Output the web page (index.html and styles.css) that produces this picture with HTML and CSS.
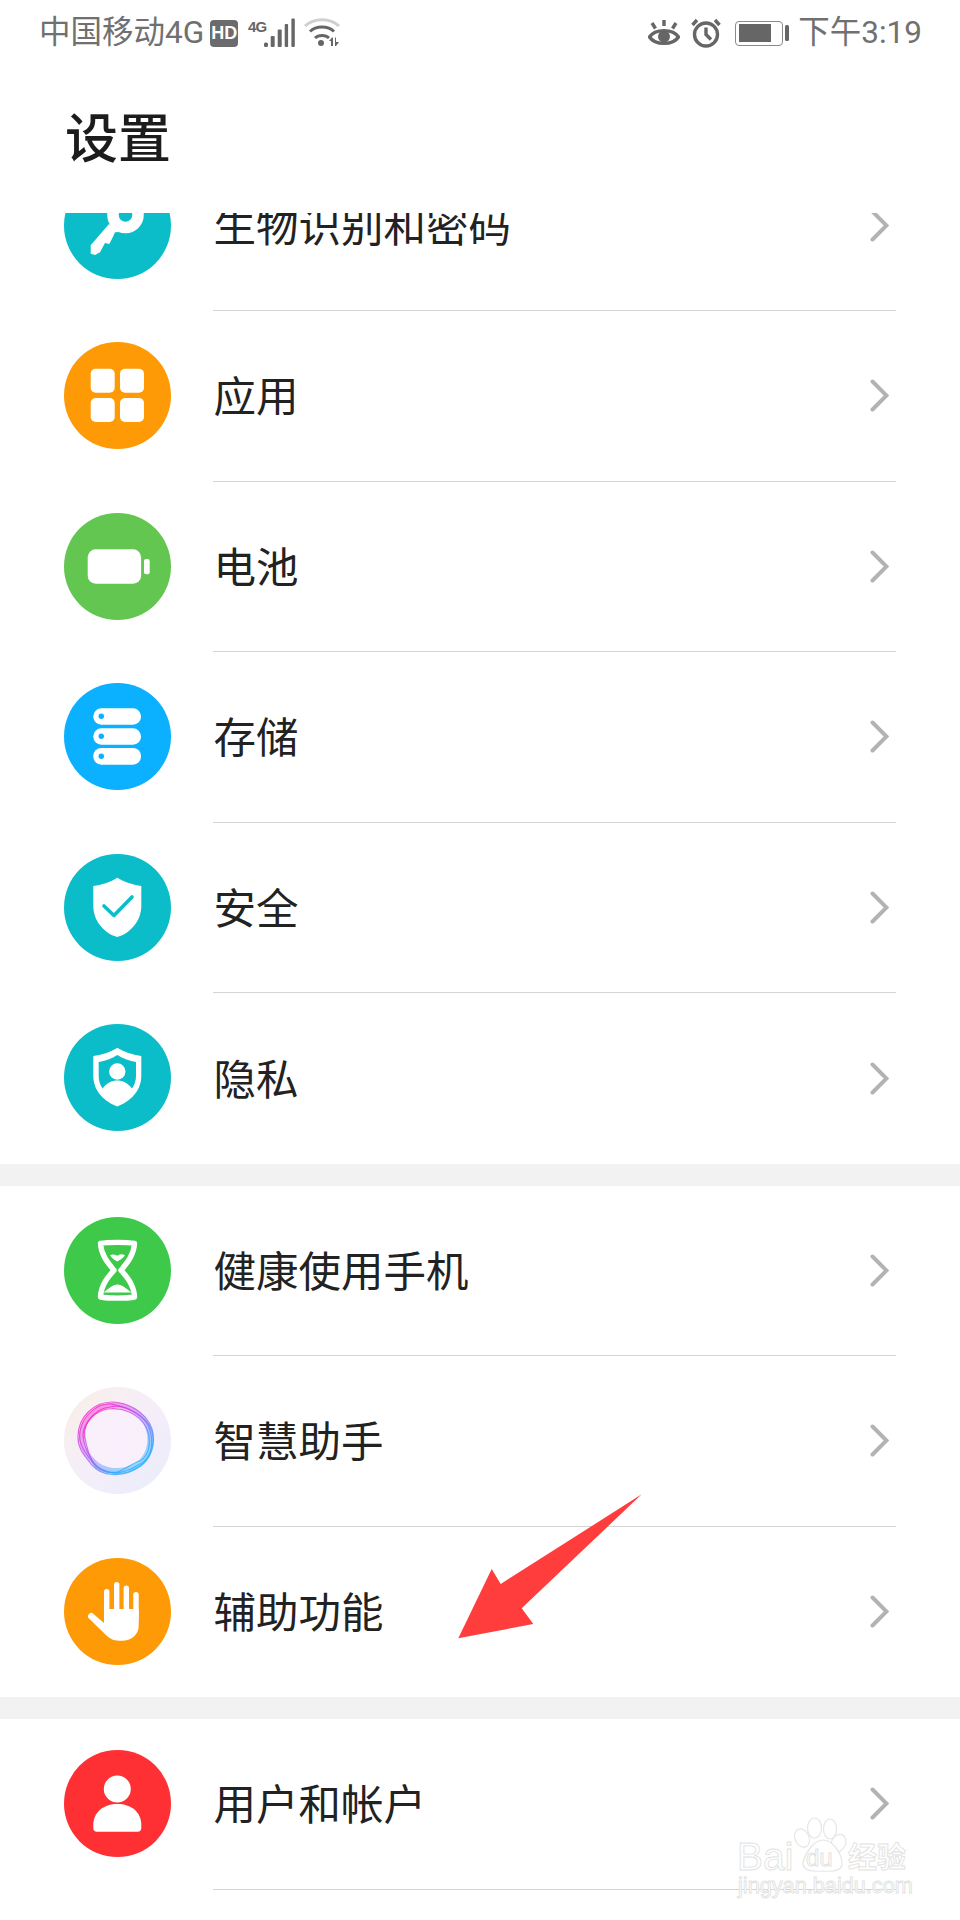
FILE: index.html
```html
<!DOCTYPE html>
<html lang="zh-CN">
<head>
<meta charset="utf-8">
<title>设置</title>
<link rel="stylesheet" href="styles.css">
</head>
<body>
<div class="page">
  <header class="status">
    <div class="status-left">
      <span class="carrier">中国移动4G</span>
      <span class="hd">HD</span>
      <svg class="signal" width="47" height="30" viewBox="0 0 47 30">
        <text class="net" x="0" y="14">4G</text>
        <rect x="16" y="24.5" width="4" height="4.5" rx="1.5"/>
        <rect x="22.7" y="18" width="4" height="11" rx="1"/>
        <rect x="29.7" y="11.5" width="4" height="17.5" rx="1"/>
        <rect x="36.7" y="6" width="3.4" height="23" rx="1"/>
        <rect x="43.4" y="0.5" width="3.4" height="28.5" rx="1"/>
      </svg>
      <svg class="wifi" width="36" height="30" viewBox="0 0 36 30">
        <path class="wifi-off" d="M1 8 C10 -0.5 26 -0.5 35 8"/>
        <path class="wifi-on" d="M6 13.5 C12 7.5 24 7.5 30 13.5"/>
        <path class="wifi-on" d="M11 20 C14.5 16.5 21.5 16.5 25 20"/>
        <circle class="wifi-dot" cx="17" cy="25" r="3"/>
        <path class="wifi-dot" d="M27 28 V23 H25 L28 19.5 L29 19.5 V28Z M31 19.5 H32 V24 H35 L32 28 H31Z"/>
      </svg>
    </div>
    <div class="status-right">
      <svg class="eye" width="32" height="28" viewBox="0 0 32 28">
        <path class="glyph-line" d="M1.5 18 C7 9.5 25 9.5 30.5 18 C25 26.5 7 26.5 1.5 18Z"/>
        <circle class="glyph-fill" cx="16" cy="17.5" r="6"/>
        <path class="glyph-line" d="M16 1 V7 M4 4 L7.5 9.5 M28 4 L24.5 9.5"/>
      </svg>
      <svg class="alarm" width="30" height="30" viewBox="0 0 30 30">
        <circle class="glyph-line" cx="15" cy="16.5" r="11.5"/>
        <path class="glyph-line" d="M15 9.5 V16.5 L20 21.5 M1.5 7 L6 2 M28.5 7 L24 2"/>
      </svg>
      <div class="battery">
        <div class="battery-body"><div class="battery-level"></div></div>
        <div class="battery-nub"></div>
      </div>
      <span class="time">下午3:19</span>
    </div>
  </header>

  <h1 class="title">设置</h1>

  <main class="list">
    <div class="scroll">
      <section class="section">
        <div class="row">
          <div class="icon teal"><svg viewBox="0 0 106.6 106.6">
            <circle cx="61.5" cy="43" r="12.5" fill="none" stroke="#fff" stroke-width="11.5"/>
            <path fill="#fff" d="M45 52 L26.7 73.3 V81.7 L31 83 L36 80.3 L41 71 L45.3 72 L49 64.7 L51 60.3 L56 60 Z"/>
          </svg></div>
          <div class="row-body"><span class="label">生物识别和密码</span><svg class="chev" viewBox="0 0 19 33"><path d="M2.5 2.5 L16.5 16.5 L2.5 30.5"/></svg></div>
        </div>
        <div class="row">
          <div class="icon orange"><svg viewBox="0 0 106.6 106.6" fill="#fff">
            <rect x="26.7" y="26.7" width="24" height="24" rx="5"/>
            <rect x="56" y="26.7" width="24" height="24" rx="5"/>
            <rect x="26.7" y="56" width="24" height="24" rx="5"/>
            <rect x="56" y="56" width="24" height="24" rx="5"/>
          </svg></div>
          <div class="row-body"><span class="label">应用</span><svg class="chev" viewBox="0 0 19 33"><path d="M2.5 2.5 L16.5 16.5 L2.5 30.5"/></svg></div>
        </div>
        <div class="row">
          <div class="icon green"><svg viewBox="0 0 106.6 106.6" fill="#fff">
            <rect x="23.7" y="36.3" width="53.4" height="34.4" rx="8"/>
            <rect x="80" y="46" width="5.7" height="15.3" rx="2"/>
          </svg></div>
          <div class="row-body"><span class="label">电池</span><svg class="chev" viewBox="0 0 19 33"><path d="M2.5 2.5 L16.5 16.5 L2.5 30.5"/></svg></div>
        </div>
        <div class="row">
          <div class="icon blue"><svg viewBox="0 0 106.6 106.6">
            <g fill="#fff">
              <rect x="29.3" y="25.3" width="47.7" height="16.4" rx="8"/>
              <rect x="29.3" y="45.3" width="47.7" height="16.4" rx="8"/>
              <rect x="29.3" y="65" width="47.7" height="16.7" rx="8"/>
            </g>
            <g fill="#0bb0ff">
              <circle cx="37.3" cy="33.3" r="2.7"/>
              <circle cx="37.3" cy="53.3" r="2.7"/>
              <circle cx="37.3" cy="73.3" r="2.7"/>
            </g>
          </svg></div>
          <div class="row-body"><span class="label">存储</span><svg class="chev" viewBox="0 0 19 33"><path d="M2.5 2.5 L16.5 16.5 L2.5 30.5"/></svg></div>
        </div>
        <div class="row">
          <div class="icon teal"><svg viewBox="0 0 106.6 106.6">
            <path fill="#fff" d="M53.3 23.7 C60 28 70 31 77.3 32 V52 C77.3 68 65 80 53.3 83 C41.6 80 29.3 68 29.3 52 V32 C37 31 47 28 53.3 23.7Z"/>
            <path fill="none" stroke="#0bbdc9" stroke-width="3.6" stroke-linecap="round" stroke-linejoin="round" d="M40 52 L50 61.5 L68 43"/>
          </svg></div>
          <div class="row-body"><span class="label">安全</span><svg class="chev" viewBox="0 0 19 33"><path d="M2.5 2.5 L16.5 16.5 L2.5 30.5"/></svg></div>
        </div>
        <div class="row">
          <div class="icon teal"><svg viewBox="0 0 106.6 106.6">
            <path fill="#fff" d="M53.3 23.7 C60 28 70 31 77.3 32 V52 C77.3 68 65 78 53.3 82.5 C41.6 78 29.3 68 29.3 52 V32 C37 31 47 28 53.3 23.7Z"/>
            <path fill="#0bbdc9" d="M53.3 31 C59 34.5 66 37 72 38 V52 C72 57 70.5 61 68 64.5 C64 59 58.5 56.5 53.3 56.5 C48 56.5 42.5 59 38.7 64.5 C36 61 34.7 57 34.7 52 V38 C41 37 48 34.5 53.3 31Z"/>
            <circle fill="#fff" cx="53.3" cy="47.5" r="8.2"/>
          </svg></div>
          <div class="row-body last"><span class="label">隐私</span><svg class="chev" viewBox="0 0 19 33"><path d="M2.5 2.5 L16.5 16.5 L2.5 30.5"/></svg></div>
        </div>
      </section>

      <section class="section">
        <div class="row">
          <div class="icon lime"><svg viewBox="0 0 106.6 106.6">
            <path fill="none" stroke="#fff" stroke-width="5.4" stroke-linejoin="round" d="M36.5 26.5 C44 25 63 25 70.5 26.5 C70 38 63 46 57 53.3 C63 60 70 68 70.5 80 C63 81.5 44 81.5 36.5 80 C37 68 44 60 50 53.3 C44 46 37 38 36.5 26.5Z"/>
            <path fill="#fff" d="M46 38.5 C50 36 52 39 54 38.5 C56 37 59 37 61 38.5 C59 41 56 43 53.3 44.5 C50.5 43 48 41 46 38.5Z M39.5 75.5 C44 72 49 67.5 53.3 67.5 C58 67.5 63 72 67.5 75.5Z"/>
          </svg></div>
          <div class="row-body"><span class="label">健康使用手机</span><svg class="chev" viewBox="0 0 19 33"><path d="M2.5 2.5 L16.5 16.5 L2.5 30.5"/></svg></div>
        </div>
        <div class="row">
          <div class="icon assistant"><svg viewBox="0 0 106.6 106.6">
            <defs>
              <linearGradient id="ringGrad" x1="0.15" y1="0.05" x2="0.85" y2="0.9">
                <stop offset="0" stop-color="#ff22cc"/>
                <stop offset="0.45" stop-color="#b45cf2"/>
                <stop offset="0.85" stop-color="#33a6ff"/>
                <stop offset="1" stop-color="#2db4ff"/>
              </linearGradient>
            </defs>
            <g fill="none" stroke="url(#ringGrad)">
              <path class="ring-band" stroke-width="5" d="M17.5 50 C17.5 33 32 19 50 18 C64 18 81 27 85 44 C88 57 84 72 71 79 C58 86 39 85 30 75 C23 68 17.5 62 17.5 50Z"/>
              <path class="ring-line" d="M14 50 C14 30 30 15 48 15 C62 15 82 24 88 42 C92 56 88 74 72 82 C58 90 38 90 28 78 C20 68 14 62 14 50Z"/>
              <path class="ring-line" d="M16 44 C19 28 35 13 52 18 C68 22 88 32 89 50 C90 66 80 80 64 85 C50 89 34 84 26 72 C20 64 14 56 16 44Z"/>
              <path class="ring-line" d="M22 56 C16 38 30 22 46 20 C60 16 78 28 84 38 C90 52 90 72 74 78 C62 86 44 90 32 80 C26 74 24 64 22 56Z"/>
              <path class="ring-line" d="M19 48 C20 34 32 24 44 22 C58 20 74 26 82 40 C88 52 86 68 76 74 C66 76 56 90 42 84 C30 82 20 62 19 48Z"/>
            </g>
          </svg></div>
          <div class="row-body"><span class="label">智慧助手</span><svg class="chev" viewBox="0 0 19 33"><path d="M2.5 2.5 L16.5 16.5 L2.5 30.5"/></svg></div>
        </div>
        <div class="row">
          <div class="icon orange"><svg viewBox="0 0 106.6 106.6" fill="#fff">
            <rect x="40" y="31" width="5.4" height="30" rx="2.7"/>
            <rect x="50" y="24" width="5.4" height="30" rx="2.7"/>
            <rect x="59.6" y="27.5" width="5.4" height="30" rx="2.7"/>
            <rect x="69.3" y="34" width="5.4" height="30" rx="2.7"/>
            <path d="M40 51 H74.7 V68 C74.7 77 67 82.7 58 82.7 H55 C49 82.7 45 80 41 76 L25 60.5 A3 3 0 0 1 29.5 56 L40 65Z"/>
          </svg></div>
          <div class="row-body last"><span class="label">辅助功能</span><svg class="chev" viewBox="0 0 19 33"><path d="M2.5 2.5 L16.5 16.5 L2.5 30.5"/></svg></div>
        </div>
      </section>

      <section class="section">
        <div class="row">
          <div class="icon red"><svg viewBox="0 0 106.6 106.6" fill="#fff">
            <circle cx="53.3" cy="39" r="13.5"/>
            <path d="M29.3 75 C29.3 62 40 54 53.3 54 C67 54 77.3 62 77.3 75 V78 A3.7 3.7 0 0 1 73.6 81.7 H33 A3.7 3.7 0 0 1 29.3 78Z"/>
          </svg></div>
          <div class="row-body"><span class="label">用户和帐户</span><svg class="chev" viewBox="0 0 19 33"><path d="M2.5 2.5 L16.5 16.5 L2.5 30.5"/></svg></div>
        </div>
      </section>
    </div>
  </main>

  <svg class="arrow" width="200" height="155" viewBox="450 1490 200 155">
    <polygon points="641.7,1494.3 521.7,1608.3 533.3,1624 458.3,1638.3 491.7,1569 500.7,1584"/>
  </svg>

  <svg class="watermark" width="190" height="100" viewBox="730 1810 190 100">
    <g class="wm-shape">
      <ellipse cx="802" cy="1838" rx="7" ry="9.5" transform="rotate(-25 802 1838)"/>
      <ellipse cx="814.5" cy="1828" rx="7" ry="10"/>
      <ellipse cx="830" cy="1829" rx="6.5" ry="10"/>
      <ellipse cx="838.5" cy="1843" rx="7" ry="9" transform="rotate(25 838.5 1843)"/>
      <path d="M803 1862 C806 1852 814 1840 823 1840 C832 1840 841 1852 842 1862 C843 1870 836 1872 823 1871 C810 1872 802 1870 803 1862Z"/>
    </g>
    <text class="wm-big" x="737" y="1870">Bai</text>
    <text class="wm-du" x="806" y="1866">du</text>
    <text class="wm-cjk" x="848" y="1868">经验</text>
    <text class="wm-url" x="738" y="1893">jingyan.baidu.com</text>
  </svg>
</div>
</body>
</html>
```

FILE: styles.css
```css
* { box-sizing: border-box; }
html, body { margin: 0; padding: 0; background: #fff; }
.page {
  position: relative;
  width: 960px;
  height: 1920px;
  overflow: hidden;
  background: #fff;
  font-family: "Noto Sans CJK SC", "Noto Sans", sans-serif;
}

/* status bar */
.status {
  display: flex;
  justify-content: space-between;
  align-items: center;
  height: 66px;
  padding: 0 38px 0 39px;
  color: #707070;
}
.status-left, .status-right { display: flex; align-items: center; }
.carrier, .time {
  font-family: Roboto, "Noto Sans CJK SC", sans-serif;
  font-size: 31.5px;
  line-height: 40px;
}
.hd {
  display: flex;
  align-items: center;
  justify-content: center;
  width: 28px;
  height: 27px;
  margin-left: 6px;
  border-radius: 4px;
  background: #6b6b6b;
  color: #fff;
  font-family: "Liberation Sans", sans-serif;
  font-size: 18px;
  font-weight: 700;
}
.signal { margin-left: 10px; fill: #666; }
.net {
  font-family: "Liberation Sans", sans-serif;
  font-size: 15px;
  font-weight: 700;
  fill: #666;
  letter-spacing: -0.8px;
}
.wifi { margin-left: 9px; }
.wifi-off { fill: none; stroke: #cfcfcf; stroke-width: 3; }
.wifi-on { fill: none; stroke: #666; stroke-width: 3; }
.wifi-dot { fill: #666; }
.glyph-line { fill: none; stroke: #666; stroke-width: 3.4; }
.glyph-fill { fill: #666; }
.alarm { margin-left: 11px; }
.battery { display: flex; align-items: center; margin-left: 14px; }
.battery-body {
  width: 48px;
  height: 25px;
  padding: 2.5px;
  border: 1.5px solid #8a8a8a;
  border-radius: 4px;
}
.battery-level { width: 32px; height: 100%; background: #666; }
.battery-nub {
  width: 4px;
  height: 16px;
  margin-left: 2px;
  border-radius: 1.5px;
  background: #666;
}
.time { margin-left: 9px; }

/* title */
.title {
  margin: 0;
  height: 147px;
  padding: 35px 0 0 65px;
  font-size: 53px;
  line-height: 68px;
  font-weight: 500;
  color: #1c1c1c;
}

/* list */
.list { height: 1707px; overflow: hidden; }
.scroll { margin-top: -72.5px; }
.section + .section { border-top: 22px solid #f2f2f2; }
.row { display: flex; align-items: stretch; height: 170.5px; padding-left: 64px; }
.icon {
  flex: none;
  align-self: center;
  width: 106.6px;
  height: 106.6px;
  margin-top: -1px;
  border-radius: 50%;
}
.icon svg { display: block; width: 100%; height: 100%; }
.teal { background: #0bbdc9; }
.orange { background: #fe9a06; }
.green { background: #63c651; }
.blue { background: #0bb0ff; }
.lime { background: #3fc94b; }
.red { background: #fe3034; }
.assistant {
  background: radial-gradient(circle at 50% 50%, #fbeefc 0, #f8f0fb 42%, rgba(255,255,255,0) 43%),
              linear-gradient(135deg, #f9efe6 0%, #f5eef9 50%, #e9ecfb 100%);
}
.ring-band { opacity: 0.45; }
.ring-line { stroke-width: 1.2; opacity: 0.8; }
.row-body {
  flex: 1;
  display: flex;
  align-items: center;
  justify-content: space-between;
  margin: 0 64px 0 42px;
  padding: 0 7px 0 1px;
  border-bottom: 1px solid #d4d4d4;
}
.row-body.last { border-bottom: 0; }
.label {
  margin-top: -3px;
  font-size: 42.5px;
  line-height: 56px;
  color: #222;
}
.chev { width: 19px; height: 33px; flex: none; }
.chev path {
  fill: none;
  stroke: #b3b3b3;
  stroke-width: 4;
  stroke-linecap: round;
  stroke-linejoin: miter;
}

/* overlays */
.arrow { position: absolute; left: 450px; top: 1490px; }
.arrow polygon { fill: #ff3d3d; }
.watermark { position: absolute; left: 730px; top: 1810px; }
.wm-shape { fill: #fff; stroke: #e6e6e6; stroke-width: 1.2; }
.wm-big, .wm-url, .wm-du, .wm-cjk {
  fill: #fff;
  stroke: #e2e2e2;
  stroke-width: 0.9;
  font-family: "Liberation Sans", sans-serif;
}
.wm-big { font-size: 39px; }
.wm-du { font-size: 24px; }
.wm-cjk { font-size: 29px; font-family: "Noto Sans CJK SC", sans-serif; font-weight: 700; }
.wm-url { font-size: 21.7px; }
```
